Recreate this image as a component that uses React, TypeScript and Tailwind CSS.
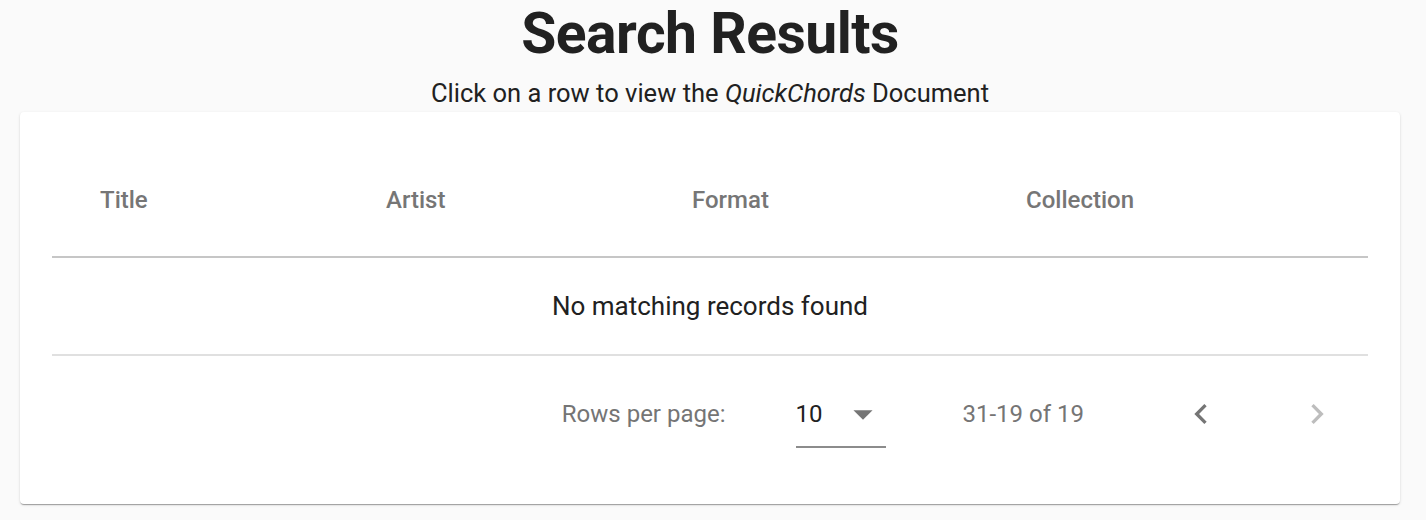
import { MdChevronLeft, MdChevronRight } from "react-icons/md";

const columns = [
  { label: "Title", width: "w-[286px]" },
  { label: "Artist", width: "w-[306px]" },
  { label: "Format", width: "w-[334px]" },
  { label: "Collection", width: "flex-1" },
];

export default function App() {
  return (
    <main className="min-h-[520px] bg-[#fafafa] font-['Roboto',sans-serif] text-[#212121]">
      <div className="w-[1420px]">
        <div className="flex flex-col items-center">
          <h1 className="text-[57px] font-bold leading-[68px] tracking-[-0.5px]">
            Search Results
          </h1>
          <p className="mt-[6px] text-[25.5px] leading-[38px]">
            Click on a row to view the <i>QuickChords</i> Document
          </p>
        </div>

        <section className="mx-[20px] h-[392px] rounded-[4px] bg-white px-[32px] pt-[32px] shadow-[0px_2px_1px_-1px_rgba(0,0,0,0.2),0px_1px_1px_0px_rgba(0,0,0,0.14),0px_1px_3px_0px_rgba(0,0,0,0.12)]">
          <div className="flex h-[114px] items-center border-b-2 border-[#c6c6c6]">
            {columns.map((c) => (
              <div
                key={c.label}
                className={`${c.width} pl-[48px] text-[24px] font-medium text-[#767676]`}
              >
                {c.label}
              </div>
            ))}
          </div>

          <div className="flex h-[98px] items-center justify-center border-b-2 border-[#e0e0e0] text-[26px]">
            No matching records found
          </div>

          <div className="flex h-[116px] items-center justify-end pr-[11px] text-[24px] text-[#757575]">
            <span>Rows per page:</span>
            <div className="ml-[70px] flex h-[68px] w-[90px] flex-col justify-center border-b-2 border-[#8c8c8c] pt-[2px]">
              <div className="flex items-center justify-between">
                <span className="text-[#212121]">10</span>
                <svg viewBox="0 0 24 24" className="h-[46px] w-[46px] fill-[#757575]">
                  <path d="M7 10l5 5 5-5z" />
                </svg>
              </div>
            </div>
            <span className="ml-[77px]">31-19 of 19</span>
            <button className="ml-[77px] flex h-[80px] w-[80px] items-center justify-center text-[#757575]">
              <MdChevronLeft size={40} />
            </button>
            <button className="ml-[36px] flex h-[80px] w-[80px] items-center justify-center text-[#bdbdbd]">
              <MdChevronRight size={40} />
            </button>
          </div>
        </section>
      </div>
    </main>
  );
}
